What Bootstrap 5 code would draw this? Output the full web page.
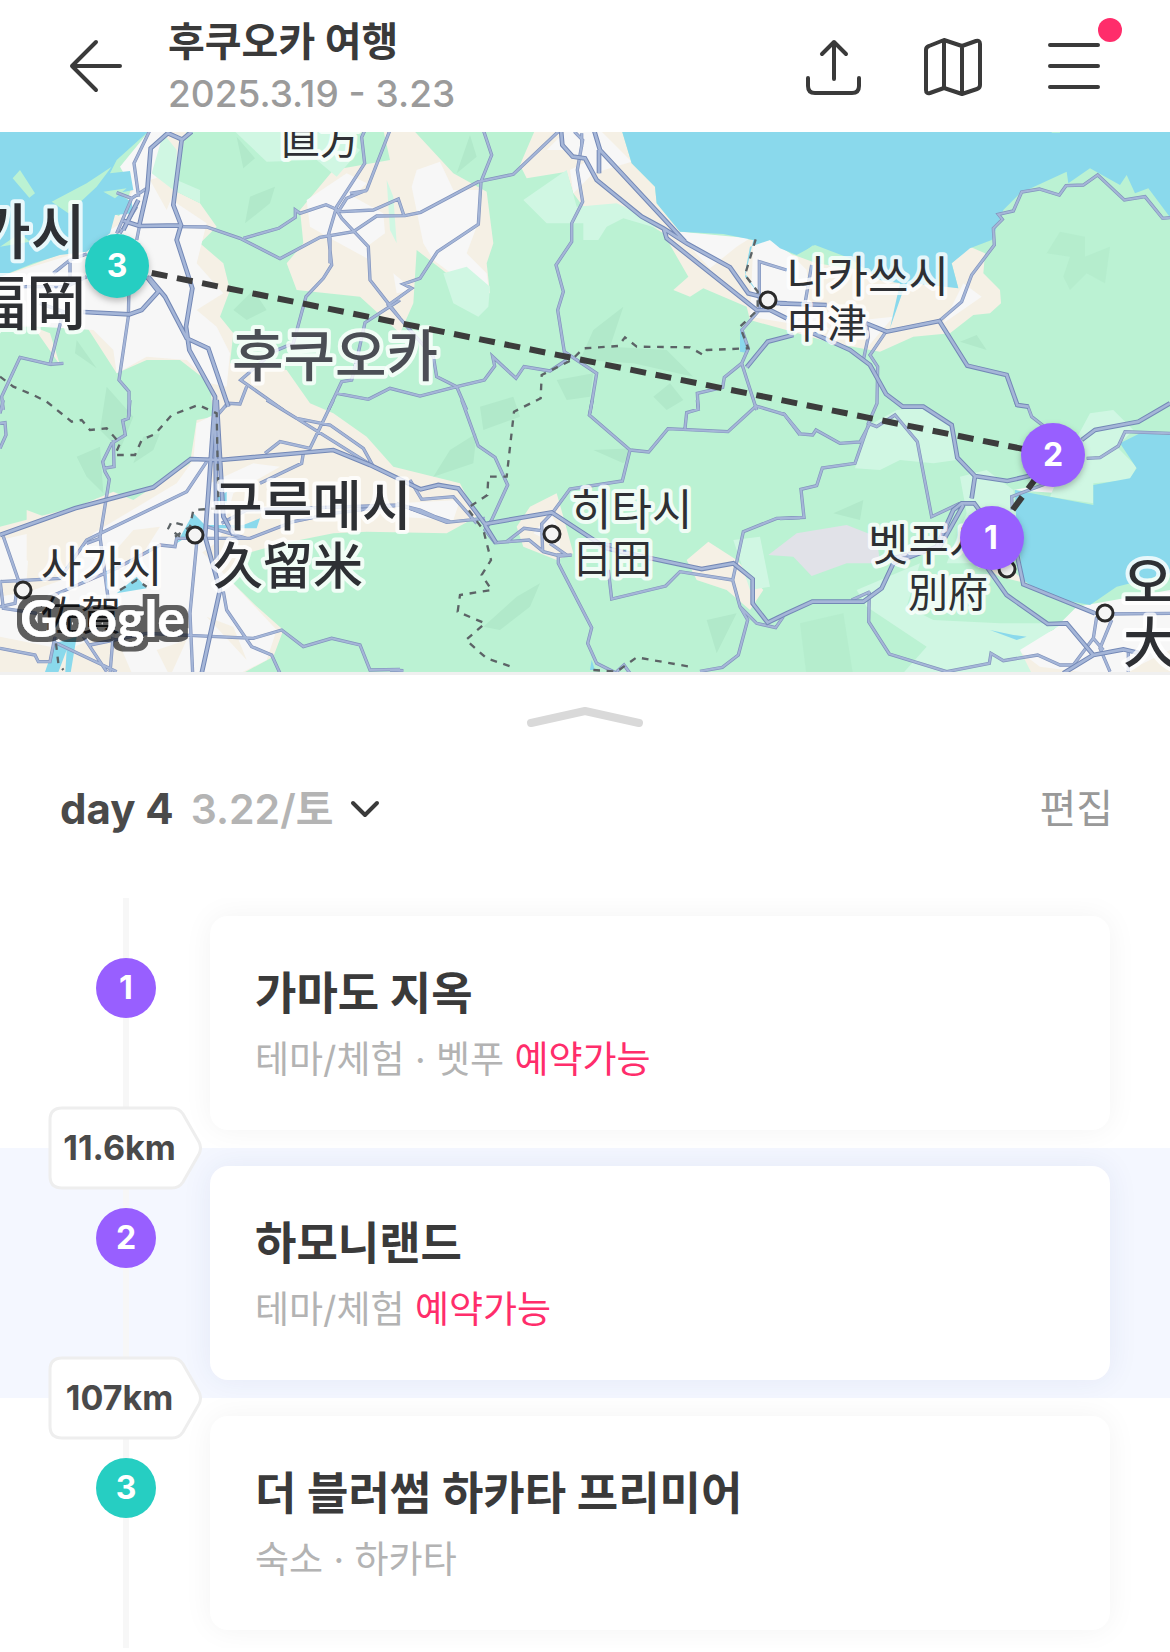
<!DOCTYPE html>
<html lang="ko">
<head>
<meta charset="utf-8">
<meta name="viewport" content="width=device-width, initial-scale=1">
<title>후쿠오카 여행</title>
<link href="https://cdn.jsdelivr.net/npm/bootstrap@5.3.0/dist/css/bootstrap.min.css" rel="stylesheet">
<style>
  body { font-family: Inter, "Noto Sans CJK KR", sans-serif; color: #3a3a3a; background: #fff; }
  .ink { color: #3a3a3a; }
  .trip-bar { height: 132px; padding: 4px 66px 0 64px; }
  .icon-btn { background: none; border: 0; padding: 0; color: #3a3a3a; line-height: 0; position: relative; }
  .icon-btn svg, .day-btn svg, .handle svg { fill: none; stroke: currentColor; stroke-linecap: round; stroke-linejoin: round; }
  .trip-bar .icon-btn { margin-bottom: 4px; }
  .trip-title { font-size: 40px; line-height: 52px; font-weight: 700; margin: 0; }
  .trip-date { font-size: 37px; line-height: 52px; font-weight: 500; color: #9b9b9b; margin: 0; }
  .trip-text { margin-left: 40px; }
  .tools { gap: 58px; }
  .alert-dot { position: absolute; width: 24px; height: 24px; border-radius: 50%; background: #ff2d6b; top: -18px; right: -18px; }
  .map-view { display: block; width: 100%; aspect-ratio: 1170 / 540; background: #bbf2d3; }
  .map-view text { font-family: "Noto Sans CJK KR", sans-serif; paint-order: stroke; stroke: #fff; stroke-opacity: .8; stroke-width: 8px; stroke-linejoin: round; fill: #2e3034; font-weight: 400; }
  .map-view .jp { font-family: "Noto Sans CJK JP", sans-serif; }
  .map-view .pin text { font-family: Inter, sans-serif; font-size: 32px; font-weight: 700; fill: #fff; stroke: none; text-anchor: middle; }
  .map-view .pin circle { filter: drop-shadow(0 3px 3px rgba(0,0,0,.25)); }
  .map-view .maker { font-family: Lato, sans-serif; font-size: 52px; font-weight: 700; fill: #fff; stroke: none; filter: url(#outline); }
  .map-view .region { font-size: 56px; font-weight: 500; fill: #4b4e55; }
  .t40 { font-size: 40px; } .t44 { font-size: 44px; } .t50 { font-size: 50px; } .t54 { font-size: 54px; } .t60 { font-size: 60px; }
  .map-view .t50, .map-view .t54, .map-view .t60 { font-weight: 500; }
  .sheet { border-top: 3px solid #f0f0f0; }
  .handle { background: none; border: 0; padding: 28px 0 0; color: #d9d9d9; line-height: 0; }
  .day-row { padding: 48px 57px 59px 60px; }
  .day-btn, .edit-btn { background: none; border: 0; padding: 0; line-height: 60px; }
  .day-btn { font-size: 42px; font-weight: 700; color: #4a4a4a; gap: 17px; }
  .day-btn .when { font-size: 41px; font-weight: 600; color: #b4b4b4; }
  .edit-btn { font-size: 40px; color: #999; }
  .stop { position: relative; height: 250px; display: grid; grid-template-columns: 170px minmax(0, 1fr); }
  .stop.active-stop { background: #f4f7ff; }
  .rail { position: relative; display: flex; justify-content: center; padding: 60px 0 0 82px; }
  .rail::before { content: ""; position: absolute; left: 123px; top: 0; bottom: 0; width: 6px; background: #f7f7f7; }
  .stop-no { position: relative; width: 60px; height: 60px; border-radius: 50%; background: #985fff; color: #fff; font-size: 32px; line-height: 60px; font-weight: 700; text-align: center; }
  .stop-no.teal { background: #26cec2; }
  .stop-body { overflow: hidden; padding: 18px 60px 18px 40px; }
  .place { display: block; height: 214px; border-radius: 18px; background: #fff; box-shadow: 0 0 30px rgba(0,0,0,.05); padding: 46px 45px 42px; color: #3a3a3a; text-decoration: none; }
  .active-stop .place { box-shadow: 0 0 30px rgba(40,70,140,.08); }
  .place h2 { font-size: 45px; line-height: 64px; font-weight: 700; margin: 0; }
  .place p { font-size: 37px; line-height: 68px; color: #b3b3b3; margin: 0; }
  .place .book { color: #ff2d6b; }
  .hop { position: absolute; z-index: 2; left: 48px; bottom: -42px; width: 154px; height: 84px; padding-right: 11px; font-size: 34px; line-height: 84px; font-weight: 700; color: #4a4a4a; text-align: center; }
  .hop svg { position: absolute; left: 0; top: 0; z-index: -1; }
</style>
</head>
<body>
<header class="trip-bar d-flex align-items-center">
  <button class="icon-btn" type="button" aria-label="뒤로">
    <svg width="64" height="56" viewBox="0 0 64 56" stroke-width="4"><path d="M56 28H8M32 4 8 28 32 52"/></svg>
  </button>
  <div class="trip-text flex-grow-1">
    <h1 class="trip-title">후쿠오카 여행</h1>
    <p class="trip-date">2025.3.19 - 3.23</p>
  </div>
  <div class="tools d-flex align-items-center">
    <button class="icon-btn" type="button" aria-label="공유">
      <svg width="60" height="60" viewBox="0 0 60 60" stroke-width="4"><path d="M30 43V6M18 18 30 6 42 18M4 42V50Q4 57 11 57H48Q55 57 55 50V42"/></svg>
    </button>
    <button class="icon-btn" type="button" aria-label="지도">
      <svg width="64" height="60" viewBox="0 0 64 60" stroke-width="4"><path d="M7 10 22 4 40 10 54 5Q58 4 58 8V49Q58 52 55 53L40 58 22 52 8 57Q4 58 4 54V14Q4 11 7 10ZM22 4V52M40 10V58"/></svg>
    </button>
    <button class="icon-btn" type="button" aria-label="메뉴">
      <svg width="60" height="60" viewBox="0 0 60 60" stroke-width="4"><path d="M6 9H54M6 30H54M6 51H54"/></svg>
      <span class="alert-dot"></span>
    </button>
  </div>
</header>

<svg class="map-view" viewBox="0 132 1170 540" preserveAspectRatio="xMidYMid slice" role="img" aria-label="후쿠오카 지도">
  <defs>
    <filter id="outline" x="-10%" y="-20%" width="120%" height="140%">
      <feMorphology in="SourceAlpha" operator="dilate" radius="5" result="fat"/>
      <feComponentTransfer in="fat" result="shade"><feFuncA type="linear" slope=".62"/></feComponentTransfer>
      <feMerge><feMergeNode in="shade"/><feMergeNode in="SourceGraphic"/></feMerge>
    </filter>
    <g id="minor" fill="none">
      <path d="M450 0 402 100 416 200M350 188 395 205 440 175M395 205 350 310M440 180 410 330M410 230 360 310M545 290 620 291 720 325 840 386 960 322 1060 305 1130 258 1215 257 1262 247 1435 155 1540 133 1680 0M730 325 836 295 886 262 886 240 900 250 978 224 1025 245 1120 240 1195 207 1212 257M1095 0 1085 22 1094 100 1010 230 985 315 995 405 970 445 918 500 880 640 820 665 722 750 850 840M1170 0 1100 180 1040 205 1015 245M1010 240 1025 265 1105 350 1110 450 1200 565 1300 680 1310 740 1370 770 1400 840M1050 190 1100 182M990 315 990 400M1230 600 1165 525 1235 475 1210 462 1260 445 1312 365 1435 283 1443 155 1475 75 1450 0M1200 510 1095 578 1070 690 1055 750 1025 755 985 840M1010 790 1105 808 1170 775 1260 798 1370 770 1453 750 1484 708 1478 680 1548 745 1572 710 1650 723 1700 690M160 430 210 390 260 372M210 390 210 460M70 470 200 470 260 440M120 520 190 545 150 703 60 682 5 800 10 840M387 470 385 560 357 750 387 785 387 860M190 700 150 703"/>
      <path transform="translate(1170 0)" d="M553 5 578 30 562 120 578 215 545 280 545 335 498 405 520 485 503 540 523 665 620 730 600 850M575 10 575 50M1108 540 1108 395 1190 420M1108 540 1056 600 1075 655 1055 700 1003 742 998 772 922 790 925 840M1055 700 1100 840"/>
      <path transform="translate(2340 0)" d="M1170 263 1148 265 1095 200 1033 210 953 135 910 165 858 167 838 195 778 177 725 186 700 243 655 253 667 268 640 295 643 345 575 435 545 515 475 575M75 520 95 405M260 580 265 620 250 690M318 605 270 675 293 710 291 820 265 880 290 890 345 855 412 935 455 1160 540 1120"/>
      <path transform="translate(0 810)" d="M390 0 385 55 368 62 376 105 335 130 308 185 315 215 328 238 300 410 325 600M340 120 342 200 310 205M0 70 15 68 18 105 0 145M10 0 0 40M640 60 683 10 720 12 740 -40M800 0 890 55 990 75 1090 145 1120 200M1000 0 930 145 840 125 795 160M910 160 905 190 780 250M890 55 1130 205M0 545 180 535 260 420 560 275 620 185M10 410 55 540 45 610 0 620M260 430 300 415M0 540 10 625 110 640M150 590 350 505 480 435 525 440 530 415 750 415 880 365 1000 340 1200 315 1350 365M620 380 740 415M665 370 740 330 1200 315 1260 330 1340 365M590 430 570 640 578 820M340 700 330 820M160 725 350 815M270 735 440 700 760 715 845 690 910 740 995 715 1080 735 1110 810 1200 808M165 710 150 785 115 785 105 765 0 745M670 575 680 630 755 740 815 765 840 820M250 710 320 815"/>
      <path transform="translate(1170 810)" d="M215 0 265 138 315 172 353 255 305 360 285 390 315 428 417 420 460 455 510 468 545 465M60 240 95 298 190 290 260 370M20 310 170 367 285 355M350 425 402 385 455 392M490 335 455 372 458 455M490 335 540 267 697 243 720 150 598 45 607 0M720 150 776 156 834 86 1014 95 1098 18 1183 43 1230 105M885 85 890 38 925 28 922 0M480 430 530 465 505 465 505 490 605 683 593 730 620 790 680 820M610 430 665 435M655 510 665 597 827 558 870 515 1028 540 1060 395 1160 355 1230 353M1028 540 1050 620 1100 670 1157 683 1180 650M1050 620 1073 660 1045 765 997 802 930 814M0 810 40 812M680 815 702 795 720 820"/>
      <path transform="translate(2340 810)" d="M0 40 12 42 62 102 98 105 108 90 180 130 240 126 270 70M265 75 225 190 127 204 110 257 63 268 72 352 0 356M705 0 710 15 743 18 755 50 800 85M920 175 960 173 1015 138 1035 95 1170 100M268 575 266 665 328 762 500 815 628 790 633 760 670 782 773 765 840 795 880 795 940 715 950 650M1170 640 975 642 945 640M270 575 215 600M800 250 695 290 697 330M995 660 960 745 990 815M940 715 970 750M1045 750 1045 820"/>
    </g>
    <g id="major" fill="none">
      <path d="M505 8 452 55 442 180 418 285M575 5 545 30 520 225 543 285 530 330 577 475 558 590 568 660 645 800 650 1290M500 8 545 28M370 272 418 288 543 286M440 440 475 485 425 540 388 553 250 546M445 440 495 500 560 625 625 655 685 830M415 210 370 300"/>
      <path transform="translate(1170 0)" d="M513 0 517 45 548 80 585 85 620 150 755 260 820 295 890 340 1020 412 1075 490 1115 500M612 0 630 60 885 335M627 60 627 130M822 298 830 325 1100 540 1140 540 1190 565M1190 520 1130 518M1210 615 1133 635 1070 712"/>
      <path transform="translate(2340 0)" d="M0 520 140 525M100 610 210 660 270 705 318 792 368 830 430 830 515 885 532 983 585 1038 682 1053 760 1035M258 580 320 605 478 573 562 707 680 735 712 825 745 830M585 1038 575 1105"/>
      <path transform="translate(0 810)" d="M0 405 225 325 460 262 572 177 660 180 1000 150 1110 195 1262 268 1315 255 1375 265 1455 372 1655 337 1820 445 1930 470 2105 507 2200 490 2258 537 2258 610 2303 668 2360 640 2437 605 2590 605 2645 565 2680 490M645 0 625 280 615 410 660 570 605 820M650 0 670 350 700 405M1455 375 1488 428"/>
      <path transform="translate(2340 810)" d="M340 475 480 440 550 315M340 490 470 440 520 330 545 310 583 310 620 360M620 500 680 585 803 672 860 670 940 765 1030 748 1080 760M710 460 730 553 945 640M940 765 850 820M905 120 945 90 1075 65 1170 10"/>
    </g>
    <g id="borders" fill="none">
      <path d="M0 740 40 770 100 795 140 815 215 875 245 870 270 900 320 895 360 940 345 975 405 975 425 930 465 912 515 855 595 825 650 850 655 1110M540 1220 505 1195 515 1175 550 1185M525 1220 570 1190 580 1140 655 1135M360 1380 410 1350 440 1370M168 1540 175 1600 190 1620"/>
      <path transform="translate(1170 0)" d="M1097 328 1065 435 1103 485 1103 540 1050 590 1075 655 950 660 940 675 900 652 740 650 705 622 685 648 580 655 545 690 455 735 452 805 372 845 350 1040 295 1040 292 1095 232 1135 280 1200 303 1290 275 1335 305 1380 210 1395 203 1445 285 1480 228 1530 290 1585 370 1612M610 1620 680 1625 740 1582 900 1610"/>
    </g>
  </defs>

  <!-- terrain: three drawing units to one map pixel -->
  <g transform="translate(0 130) scale(.333333)">
    <g fill="#f5f0e5">
      <path d="M450 0H560L520 180 600 220 650 290 600 340 670 400 690 480 660 560 700 610 690 700 860 720 930 820 1000 850 1100 920 1180 1010 1320 1045 1380 1060 1430 1160 1340 1210 1100 1205 1000 1210 850 1240 740 1270 680 1340 760 1420 850 1500 820 1580 710 1640H0V1190L230 1130 340 1085 400 1110 460 1070 570 1000 590 870 640 860 630 760 540 690 440 690 350 730 260 590 0 590V440L350 310Z"/>
      <path d="M860 400 910 340 900 240 1000 120 1170 90 1150 0H1240L1360 130 1460 185 1480 340 1460 400 1470 490 1340 430 1250 360 1240 520 1200 610 1080 500 890 480Z"/>
      <path d="M1605 0H1865L1895 100 1965 170 1970 220 2040 305 2260 330 2450 400 2640 430 2875 475 2855 400 2910 350 2955 370 2950 430 3000 480 3003 520 2970 550 2920 555 2850 610 2740 620 2640 665 2500 640 2340 595 2250 570 2240 530 2110 475 2070 500 2020 480 2065 440 1990 310 1910 260 1750 230 1720 190 1700 125 1580 145 1560 105Z"/>
      <path d="M1550 1190 1590 1130 1670 1090 1690 1160 1720 1270 1670 1290 1570 1250ZM2060 1290 2125 1235 2210 1290 2290 1380 2250 1440 2180 1380 2090 1350ZM3050 1560 3160 1500 3250 1430 3510 1400V1640H3100ZM2900 1280 2950 1240 3080 1360 3000 1340Z"/>
    </g>
    <g fill="#f7f7f7">
      <path d="M450 0 500 0 460 130 530 220 620 280 590 400 670 490 590 540 650 590 690 670 680 770 630 760 560 690 440 680 350 730 340 660 280 600 120 590 0 580V440L260 360 340 290 400 180 360 110Z"/>
      <path d="M920 210 1040 130 1100 160 1060 200 1150 250 1155 310 1100 350 1110 390 1000 330 930 290ZM1250 120 1320 95 1360 180 1440 180 1430 290 1400 370 1460 430 1468 490 1380 450 1300 390 1270 340 1235 170ZM1180 430 1240 480 1190 490Z"/>
      <path d="M1640 60 1700 0 1800 0 1895 95 1780 130 1720 190 1710 120 1770 90 1690 60ZM2040 305 2250 325 2210 350 2130 415 2060 340ZM2260 340 2310 330 2370 370 2420 420 2430 540 2490 600 2250 560ZM2830 580 2890 460 2945 500ZM2590 570 2680 560 2600 655Z"/>
      <path d="M590 880 650 850 630 1060 760 1000 840 1010 700 1090 660 1230 560 1300 400 1380 240 1430 180 1330 280 1210 530 1060 580 990ZM0 1230 90 1210 80 1350 0 1350ZM100 1380 560 1220 680 1340 830 1500 800 1590 700 1640 400 1640 340 1500 200 1560 0 1520V1400ZM1190 1120 1380 1110 1360 1170 1190 1160ZM1600 1210 1650 1150 1680 1200 1680 1250ZM3040 1550 3160 1500 3230 1430 3510 1380V1560L3350 1640 3120 1610ZM3040 1080 3160 1060 3180 1090ZM2660 1380 2720 1330 2725 1395Z"/>
    </g>
    <g fill="#f5f0e5">
      <path d="M450 150 480 140 520 190 500 240ZM340 250 380 270 330 300ZM100 590 150 610 180 705ZM80 1140 240 1200 140 1340 80 1290ZM470 1560 560 1530 510 1640ZM330 1280 400 1200 480 1190 410 1300ZM620 1460 700 1490 740 1590ZM690 1120 770 1080 950 1110 1000 1180 800 1220Z"/>
    </g>
    <g fill="#d0f7e3">
      <path d="M455 130 490 10 530 60 530 150 600 180 600 220 520 180ZM700 0H1000L1080 60 1010 140 950 90 800 95ZM1160 150 1180 200 1190 340 1170 300ZM1330 430 1400 410 1470 470 1465 530 1435 560 1360 520ZM1570 210 1700 120 1730 230 1850 220 1960 270 1990 300 1870 265 1820 290 1795 330 1750 330V280L1640 280Z"/>
      <path d="M2565 1015 2600 890 2690 840 2770 830 2855 890 2870 990 2800 1000 2700 990 2640 1020ZM2880 1040 2960 1020 3040 1080 3050 1170 2960 1300 2840 1300 2900 1150ZM2570 1380 2760 1300 2720 1430 2800 1470 3000 1480 3190 1480 3060 1560 3100 1640H2700L2780 1550 2600 1430ZM3200 980 3270 850 3340 840 3400 900 3350 950 3410 1010 3390 1050 3280 1060 3280 1120 3150 1100ZM2200 1230 2280 1220 2310 1370 2250 1380Z"/>
    </g>
    <path fill="#e1e2e8" d="M2305 1275 2390 1210 2540 1185 2630 1220 2640 1300 2540 1300 2435 1338 2380 1280Z"/>
    <g fill="#b1e9ca">
      <path d="M710 20 765 85 730 115ZM750 200 825 170 810 220 735 280ZM700 540 760 480 800 540 740 570ZM230 630 290 715 225 670ZM320 770 400 860 360 960 300 900ZM230 980 300 950 310 1090 260 1040ZM400 1000 430 920 480 910 460 960ZM1370 130 1410 15 1430 80ZM1780 600 1870 530 1830 650 2000 660 2080 740 1900 700 1740 690ZM1670 750 1780 730 1770 800 1700 810ZM1960 800 2010 760 2050 810 2000 840ZM1440 830 1540 800 1560 860 1450 900ZM1350 960 1430 910 1420 1000 1300 1040ZM1450 1490 1550 1400 1620 1360 1590 1430 1500 1500ZM2120 1470 2210 1450 2150 1570ZM1780 960 1900 955 1870 1000ZM2880 635 2930 615 2960 660ZM2500 1150 2590 1110 2580 1170Z"/>
      <path opacity=".6" d="M3140 370 3180 305 3255 320 3255 380 3330 350 3315 460 3260 430 3210 480 3190 440 3210 380ZM2400 1480 2530 1450 2560 1640H2420Z"/>
    </g>
    <g fill="#8ad9ec">
      <path d="M0 0H450L350 90 330 130 390 123 400 180 350 190 395 215 400 250 345 255 330 310 260 365 180 375 100 400 0 440Z"/>
      <path d="M1865 0H3510V262L3445 175 3405 190 3380 135 3360 165 3270 115 3205 160 3200 125 3060 190 3010 240 2975 330 2910 355 2855 400 2875 475 2740 460 2710 480 2670 595 2700 460 2640 450 2550 385 2445 345 2390 375 2340 355 2310 330 2250 350 2235 430 2275 490 2235 440 2260 330 2170 312 2040 305 1970 220 1965 170 1895 100Z"/>
      <path d="M3510 915 3420 910 3360 940 3410 1015 3390 1045 3280 1065 3280 1125 3150 1100 3045 1080 3050 1200 3070 1350 3140 1400 3270 1425 3350 1370 3510 1330ZM440 450 460 470 470 485ZM580 1150 615 1185 730 1185 780 1165 770 1195 620 1195 570 1215 530 1240ZM640 1110 680 1085 680 1120ZM350 1390 410 1340 440 1375ZM130 1640 165 1540 230 1520 210 1640H195L200 1560 170 1640ZM2220 590 2245 670 2220 665ZM2970 1500 3040 1515 3080 1520 3050 1530ZM1775 1590 1785 1620 1770 1620Z"/>
    </g>
    <g fill="#bbf2d3">
      <path d="M38 145 60 120 105 190 88 203ZM155 215 260 160 335 110 290 170 205 250ZM310 185 380 175 345 205ZM0 350 60 310 90 335ZM2400 375 2440 345 2445 380ZM3155 0H3180V8H3155Z"/>
    </g>
    <use href="#minor" stroke="#8294bd" stroke-width="10"/><use href="#minor" stroke="#a5b6d8" stroke-width="6"/>
    <use href="#major" stroke="#7388b6" stroke-width="14"/><use href="#major" stroke="#a5b6d8" stroke-width="8"/>
    <use href="#borders" stroke="#5c6366" stroke-width="7" stroke-dasharray="20 20"/>
  </g>

  <g fill="#f4f4f4" stroke="#2a2a2a" stroke-width="3">
    <circle cx="768" cy="300" r="8"/><circle cx="195" cy="535" r="8"/><circle cx="23" cy="590" r="8"/><circle cx="552" cy="534" r="8"/><circle cx="1007" cy="569" r="8"/><circle cx="1105" cy="613" r="8"/>
  </g>
  <text class="t60" x="86" y="254" text-anchor="end">가시</text>
  <text class="t60 jp" x="86" y="325" text-anchor="end">福岡</text>
  <text class="t40 jp" x="280" y="154">直方</text>
  <text class="region" x="335" y="376" text-anchor="middle">후쿠오카</text>
  <text class="t54" x="213" y="526">구루메시</text>
  <text class="t50 jp" x="213" y="584">久留米</text>
  <text class="t44" x="41" y="583">사가시</text>
  <text class="t40 jp" x="41" y="630">佐賀</text>
  <text class="t44" x="571" y="526">히타시</text>
  <text class="t40 jp" x="572" y="573">日田</text>
  <text class="t44" x="787" y="293">나카쓰시</text>
  <text class="t40 jp" x="787" y="338">中津</text>
  <text class="t44" x="868" y="561">벳푸시</text>
  <text class="t40 jp" x="908" y="607">別府</text>
  <text class="t54" x="1123" y="603">오이</text>
  <text class="t54 jp" x="1123" y="663">大分</text>
  <text class="maker" x="20" y="637">Google</text>

  <g fill="none" stroke="#3c3c3c" stroke-width="6">
    <path d="M117 266 1053 455" stroke-dasharray="16 9.7" stroke-dashoffset="16"/>
    <path d="M1053 455 992 538" stroke-dasharray="16 10"/>
  </g>
  <g class="pin"><circle cx="117" cy="266" r="32" fill="#26cec2"/><text x="117" y="277">3</text></g>
  <g class="pin"><circle cx="1053" cy="455" r="32" fill="#985fff"/><text x="1053" y="466">2</text></g>
  <g class="pin"><circle cx="992" cy="538" r="32" fill="#985fff"/><text x="991" y="549">1</text></g>
</svg>

<main class="sheet">
  <div class="text-center">
    <button class="handle" type="button" aria-label="목록 펼치기"><svg width="124" height="28" viewBox="0 0 124 28" stroke-width="8"><path d="M8 20 62 8 116 20"/></svg></button>
  </div>
  <div class="day-row d-flex justify-content-between align-items-center">
    <button class="day-btn d-flex align-items-center" type="button">
      <span>day 4</span><span class="when">3.22/토</span>
      <svg class="ink" width="30" height="24" viewBox="0 0 30 24" stroke-width="4"><path d="M3 6 15 18 27 6"/></svg>
    </button>
    <button class="edit-btn" type="button">편집</button>
  </div>

  <ol class="list-unstyled mb-1">
    <li class="stop">
      <div class="rail"><span class="stop-no">1</span></div>
      <div class="stop-body"><a class="place" href="#stop1">
        <h2>가마도 지옥</h2>
        <p>테마/체험 · 벳푸 <span class="book">예약가능</span></p>
      </a></div>
      <div class="hop"><svg width="154" height="84" viewBox="0 0 154 84" fill="#fff" stroke="#eee" stroke-width="3"><path d="M14 2H124Q131 2 135 8L151 36Q154 42 151 48L135 76Q131 82 124 82H14Q2 82 2 70V14Q2 2 14 2Z"/></svg>11.6km</div>
    </li>
    <li class="stop active-stop">
      <div class="rail"><span class="stop-no">2</span></div>
      <div class="stop-body"><a class="place" href="#stop2">
        <h2>하모니랜드</h2>
        <p>테마/체험 <span class="book">예약가능</span></p>
      </a></div>
      <div class="hop"><svg width="154" height="84" viewBox="0 0 154 84" fill="#fff" stroke="#eee" stroke-width="3"><path d="M14 2H124Q131 2 135 8L151 36Q154 42 151 48L135 76Q131 82 124 82H14Q2 82 2 70V14Q2 2 14 2Z"/></svg>107km</div>
    </li>
    <li class="stop">
      <div class="rail"><span class="stop-no teal">3</span></div>
      <div class="stop-body"><a class="place" href="#stop3">
        <h2>더 블러썸 하카타 프리미어</h2>
        <p>숙소 · 하카타</p>
      </a></div>
    </li>
  </ol>
</main>
<script src="https://cdn.jsdelivr.net/npm/bootstrap@5.3.0/dist/js/bootstrap.bundle.min.js"></script>
</body>
</html>
